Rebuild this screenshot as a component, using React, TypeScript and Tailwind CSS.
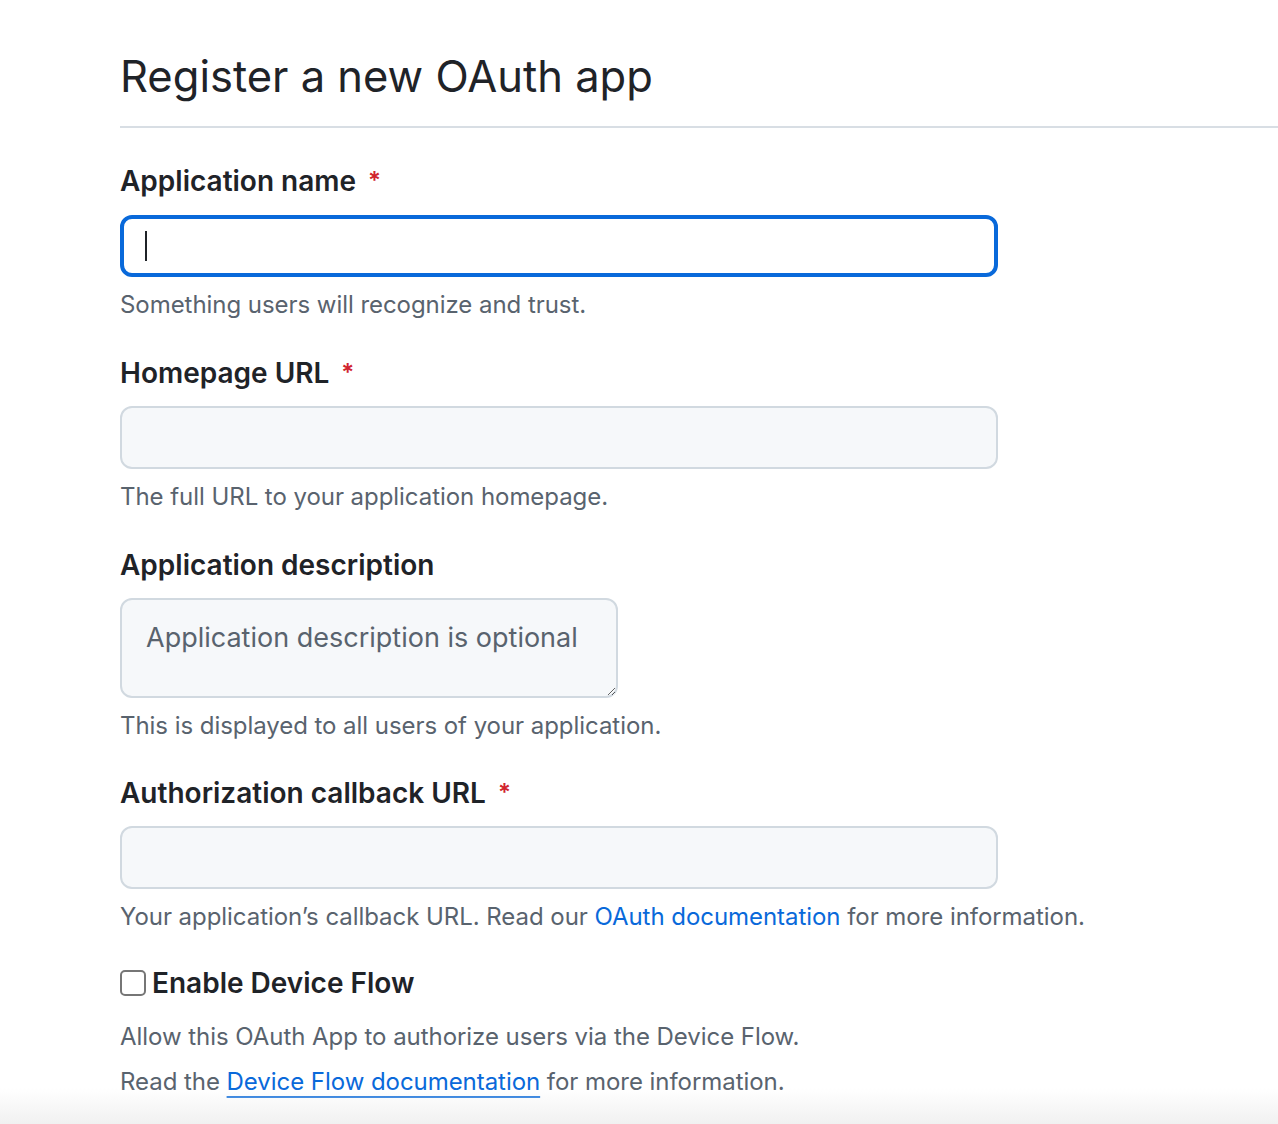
import React from 'react';

const Label: React.FC<{ children: React.ReactNode; required?: boolean }> = ({ children, required }) => (
  <div className="flex items-center h-[40px] text-[28px] leading-[40px] font-semibold text-[#1f2328]">
    {children}
    {required && <span className="ml-[12px] text-[24px] text-[#d1242f]">*</span>}
  </div>
);

const Note: React.FC<{ children: React.ReactNode; className?: string }> = ({ children, className }) => (
  <p className={`text-[24px] leading-[36px] tracking-[-0.05px] text-[#59636e] ${className ?? ''}`}>{children}</p>
);

const TextField: React.FC = () => (
  <input
    type="text"
    className="mt-[13px] block w-[878px] h-[63px] rounded-[12px] border-2 border-[#d1d9e0] bg-[#f6f8fa] px-[24px] text-[28px] outline-none"
  />
);

const App: React.FC = () => {
  return (
    <div className="relative h-[1124px] overflow-hidden bg-white font-['Inter','Noto_Sans',sans-serif]">
      <div className="pl-[120px]">
        {/* Header */}
        <div className="pt-[48px] pb-[22px] border-b-2 border-[#d8dee4]">
          <h1 className="h-[56px] text-[43.5px] leading-[56px] font-normal text-[#1f2328]">Register a new OAuth app</h1>
        </div>

        <form className="w-[1000px]">
          <div className="mt-[33px]">
            <Label required>Application name</Label>
            <div className="mt-[14px] flex items-center w-[878px] h-[62px] rounded-[12px] border-[4px] border-[#0969da] bg-white pl-[21px]">
              <span className="w-[2px] h-[30px] bg-[#1f2328]" />
            </div>
            <Note className="mt-[10px]">Something users will recognize and trust.</Note>
          </div>

          <div className="mt-[30px]">
            <Label required>Homepage URL</Label>
            <TextField />
            <Note className="mt-[10px]">The full URL to your application homepage.</Note>
          </div>

          <div className="mt-[30px]">
            <Label>Application description</Label>
            <textarea
              placeholder="Application description is optional"
              className="mt-[13px] block w-[498px] h-[100px] rounded-[12px] border-2 border-[#d1d9e0] bg-[#f6f8fa] pl-[24px] pr-[6px] pt-[18px] text-[27px] leading-[40px] text-[#1f2328] placeholder:text-[#59636e] outline-none resize-y"
            />
            <Note className="mt-[10px]">This is displayed to all users of your application.</Note>
          </div>

          <div className="mt-[29px]">
            <Label required>Authorization callback URL</Label>
            <TextField />
            <Note className="mt-[10px]">
              Your application’s callback URL. Read our{' '}
              <a href="#" className="text-[#0969da]">OAuth documentation</a> for more information.
            </Note>
          </div>

          <div className="mt-[28px]">
            <label className="flex items-center h-[40px] gap-[6px] text-[28px] leading-[40px] font-semibold text-[#1f2328]">
              <span className="w-[26px] h-[26px] rounded-[5px] border-2 border-[#767676] bg-white" />
              Enable Device Flow
            </label>
            <Note className="mt-[16px]">Allow this OAuth App to authorize users via the Device Flow.</Note>
            <Note className="mt-[9px]">
              Read the{' '}
              <a href="#" className="text-[#0969da] underline decoration-2 underline-offset-[6px]">Device Flow documentation</a>{' '}
              for more information.
            </Note>
          </div>
        </form>
      </div>

      {/* bottom bar shadow */}
      <div className="absolute bottom-0 left-0 right-0 h-[36px] bg-gradient-to-b from-white/0 to-[#f1f1f1]" />
    </div>
  );
};

export default App;
